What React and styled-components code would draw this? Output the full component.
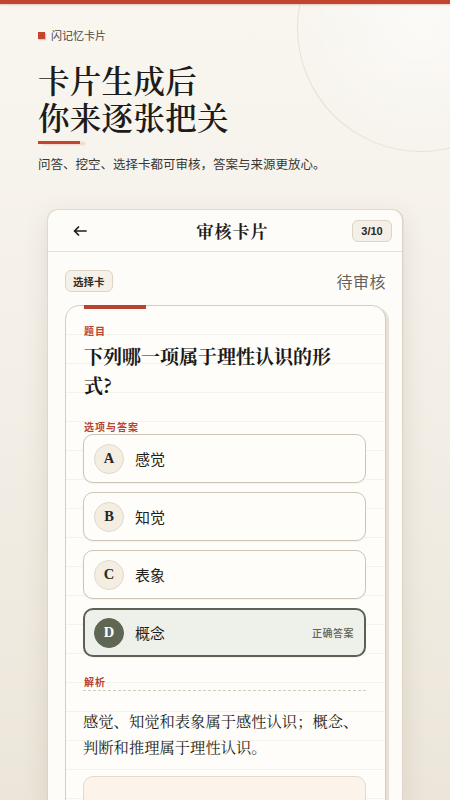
import React from "react";
import styled, { createGlobalStyle } from "styled-components";

const SANS = `"Noto Sans CJK SC", "Noto Sans", sans-serif`;
const SERIF = `"Noto Serif CJK SC", "Noto Sans CJK SC", "Liberation Serif", serif`;

const GlobalStyle = createGlobalStyle`
    html, body {
        margin: 0;
        padding: 0;
        height: 800px;
        overflow: hidden;
    }
    body {
        background: #f3eee6;
        font-family: ${SANS};
    }
`

const Page = styled.div`
    position: relative;
    width: 450px;
    height: 800px;
    overflow: hidden;
    background: linear-gradient(180deg, #f9f6f0 0%, #f5f1ea 35%, #ece6da 100%);
    &::before {
        content: "";
        position: absolute;
        left: 297px;
        top: -96px;
        width: 246px;
        height: 246px;
        border-radius: 50%;
        border: 1px solid rgba(205, 185, 165, 0.35);
        background: radial-gradient(circle, rgba(255,255,255,0.5) 0%, rgba(255,255,255,0) 70%);
    }
`

const TopStripe = styled.div`
    position: relative;
    height: 4px;
    background: #c2462f;
    box-shadow: 0 1px 2px rgba(160, 60, 40, 0.25);
`

const Hero = styled.div`
    position: relative;
    padding: 24px 38px 0;
`

const Tag = styled.div`
    display: flex;
    align-items: center;
    gap: 6px;
    font-size: 11px;
    line-height: 14px;
    color: #4a4540;
    &::before {
        content: "";
        width: 7px;
        height: 7px;
        background: #c2462f;
        box-shadow: 1px 1px 1px rgba(194, 70, 47, 0.3);
    }
`

const Title = styled.h1`
    margin: 19px 0 0;
    font-family: ${SERIF};
    font-size: 31.5px;
    line-height: 37px;
    font-weight: 600;
    color: #1e1c1a;
    letter-spacing: 0.3px;
`

const TitleLine = styled.span`
    display: block;
`

const Underline = styled.div`
    margin-top: 6px;
    width: 42px;
    height: 3px;
    background: #c2462f;
    box-shadow: 5px 1px 2px rgba(200, 90, 70, 0.2);
`

const Subtitle = styled.p`
    margin: 11px 0 0;
    font-size: 12.5px;
    line-height: 18px;
    color: #3a3632;
`

const Phone = styled.div`
    position: relative;
    margin: 37px 0 0 48px;
    width: 354px;
    height: 600px;
    border-radius: 10px 10px 0 0;
    background: #fdfcf8;
    box-shadow: 0 0 0 1px rgba(215, 205, 188, 0.6), 2px 0 0 #e6dfd2, 0 8px 26px rgba(110, 90, 60, 0.16);
`

const Header = styled.div`
    display: grid;
    grid-template-columns: 1fr auto 1fr;
    align-items: center;
    height: 41px;
    padding: 0 10px 0 25px;
    border-bottom: 1px solid #e7e1d6;
`

const Back = styled.div`
    display: flex;
    align-items: center;
    color: #1e1c1a;
`

const HeaderTitle = styled.div`
    font-family: ${SERIF};
    font-size: 17px;
    font-weight: 700;
    letter-spacing: 1px;
    color: #1e1c1a;
`

const Counter = styled.div`
    justify-self: end;
    width: 40px;
    height: 22px;
    box-sizing: border-box;
    display: flex;
    align-items: center;
    justify-content: center;
    border-radius: 6px;
    border: 1px solid #ddd5c8;
    background: #f5f0e7;
    font-family: "Liberation Sans", sans-serif;
    font-size: 11px;
    font-weight: 700;
    color: #2a2724;
`

const Body = styled.div`
    padding: 0 16px 0 17px;
`

const StatusRow = styled.div`
    display: flex;
    justify-content: space-between;
    align-items: center;
    margin-top: 17px;
`

const Chip = styled.div`
    height: 22px;
    box-sizing: border-box;
    padding: 0 7px;
    display: flex;
    align-items: center;
    border-radius: 6px;
    border: 1px solid #ddd4c6;
    background: #f6f1e8;
    font-size: 10.5px;
    font-weight: 700;
    color: #2f2b27;
`

const Status = styled.div`
    font-size: 16px;
    color: #66615a;
    letter-spacing: 0.5px;
`

const Card = styled.div`
    position: relative;
    margin-top: 12px;
    padding: 18px 19px 0 17px;
    height: 520px;
    border: 1px solid #d6cdbf;
    border-radius: 14px 14px 0 0;
    background-color: #fefdf9;
    background-image: repeating-linear-gradient(180deg, transparent 0 28px, rgba(190, 170, 140, 0.13) 28px 29px);
    box-shadow: 3px 2px 0 #e7e0d4;
    &::before {
        content: "";
        position: absolute;
        left: 18px;
        top: -1px;
        width: 62px;
        height: 4px;
        background: #b8432f;
    }
`

const Label = styled.div`
    font-size: 10px;
    line-height: 14px;
    font-weight: 700;
    color: #b8432f;
    letter-spacing: 1px;
    margin-top: ${p => p.$top || 0}px;
    padding-left: 1px;
`

const DashedLabel = styled(Label)`
    padding-bottom: 1px;
    border-bottom: 1px dashed #d4cabb;
`

const Question = styled.div`
    margin-top: 3px;
    max-width: 262px;
    padding-left: 1px;
    font-family: ${SERIF};
    font-size: 19px;
    line-height: 29px;
    font-weight: 700;
    color: #1b1917;
`

const Options = styled.div`
    display: flex;
    flex-direction: column;
    gap: 9px;
`

const Option = styled.div`
    display: flex;
    align-items: center;
    gap: 11px;
    height: 49px;
    box-sizing: border-box;
    padding: 0 10px 0 ${p => (p.$correct ? 9 : 10)}px;
    border-radius: 10px;
    border: ${p => (p.$correct ? "2px solid #5b6253" : "1px solid #cec5b7")};
    background: ${p => (p.$correct ? "#eef0ea" : "#fefdfa")};
    box-shadow: 0 1px 1px rgba(120, 100, 70, 0.08);
`

const Letter = styled.div`
    width: 30px;
    height: 30px;
    flex: none;
    border-radius: 50%;
    display: flex;
    align-items: center;
    justify-content: center;
    box-sizing: border-box;
    border: 1px solid ${p => (p.$correct ? "#5e6753" : "#e2d9ca")};
    background: ${p => (p.$correct ? "#5e6753" : "#f4ede1")};
    color: ${p => (p.$correct ? "#ffffff" : "#2a2622")};
    font-family: "Liberation Serif", serif;
    font-size: 14.5px;
    font-weight: 700;
`

const OptionText = styled.div`
    flex: 1;
    font-size: 15px;
    color: #1f1d1a;
`

const CorrectTag = styled.div`
    font-size: 10px;
    font-weight: 500;
    color: #626256;
    letter-spacing: 0.5px;
`

const Explain = styled.div`
    margin-top: 16px;
    font-family: ${SERIF};
    font-size: 15.3px;
    line-height: 26px;
    color: #1f1d1a;
`

const SourceBox = styled.div`
    margin-top: 17px;
    height: 60px;
    border-radius: 10px;
    border: 1px solid #e4dacb;
    background: #fcf4ea;
`

const options = [
    { key: "A", text: "感觉" },
    { key: "B", text: "知觉" },
    { key: "C", text: "表象" },
    { key: "D", text: "概念", correct: true },
]

const ArrowLeft = () => (
    <svg width="14" height="10" viewBox="0 0 14 10" fill="none">
        <path d="M13 5H1.5M5.5 1L1.5 5L5.5 9" stroke="#1e1c1a" strokeWidth="1.7" strokeLinecap="round" strokeLinejoin="round" />
    </svg>
)

export default function App() {
    return (
        <Page>
            <GlobalStyle />
            <TopStripe />
            <Hero>
                <Tag>闪记忆卡片</Tag>
                <Title>
                    <TitleLine>卡片生成后</TitleLine>
                    <TitleLine>你来逐张把关</TitleLine>
                </Title>
                <Underline />
                <Subtitle>问答、挖空、选择卡都可审核，答案与来源更放心。</Subtitle>
            </Hero>
            <Phone>
                <Header>
                    <Back><ArrowLeft /></Back>
                    <HeaderTitle>审核卡片</HeaderTitle>
                    <Counter>3/10</Counter>
                </Header>
                <Body>
                    <StatusRow>
                        <Chip>选择卡</Chip>
                        <Status>待审核</Status>
                    </StatusRow>
                    <Card>
                        <Label>题目</Label>
                        <Question>下列哪一项属于理性认识的形式?</Question>
                        <Label $top={21}>选项与答案</Label>
                        <Options>
                            {options.map(o => (
                                <Option key={o.key} $correct={o.correct}>
                                    <Letter $correct={o.correct}>{o.key}</Letter>
                                    <OptionText>{o.text}</OptionText>
                                    {o.correct && <CorrectTag>正确答案</CorrectTag>}
                                </Option>
                            ))}
                        </Options>
                        <DashedLabel $top={18}>解析</DashedLabel>
                        <Explain>感觉、知觉和表象属于感性认识；概念、判断和推理属于理性认识。</Explain>
                        <SourceBox />
                    </Card>
                </Body>
            </Phone>
        </Page>
    );
}
